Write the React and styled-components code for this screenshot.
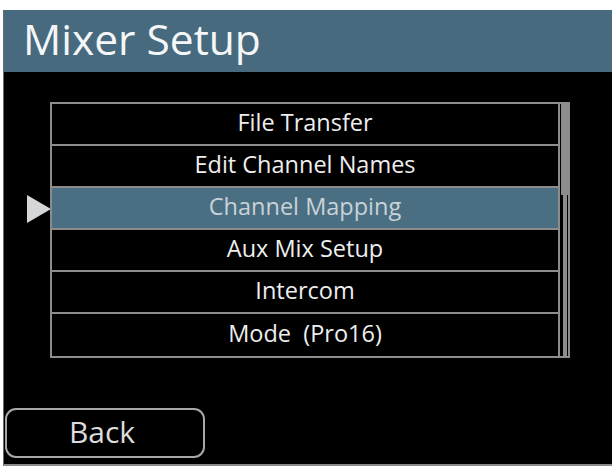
import styled, { createGlobalStyle } from "styled-components";

const GlobalStyle = createGlobalStyle`
  html, body {
    margin: 0;
    padding: 0;
    background: #ffffff;
  }
  body {
    font-family: "Open Sans", "Noto Sans", sans-serif;
  }
`;

const items = [
  "File Transfer",
  "Edit Channel Names",
  "Channel Mapping",
  "Aux Mix Setup",
  "Intercom",
  "Mode  (Pro16)",
];

const selectedIndex = 2;

export default function App() {
  return (
    <>
      <GlobalStyle />
      <Screen>
        <Header>
          <Title>Mixer Setup</Title>
        </Header>
        <Body>
          <MenuArea>
            <Pointers>
              {items.map((item, i) => (
                <PointerSlot key={item}>
                  {i === selectedIndex && <Pointer />}
                </PointerSlot>
              ))}
            </Pointers>
            <MenuBox>
              <Menu>
                {items.map((item, i) => (
                  <Row key={item} $selected={i === selectedIndex}>
                    {item}
                  </Row>
                ))}
              </Menu>
              <ScrollTrack>
                <ScrollThumb />
              </ScrollTrack>
            </MenuBox>
          </MenuArea>
          <Footer>
            <BackButton>Back</BackButton>
          </Footer>
        </Body>
      </Screen>
    </>
  );
}

const Screen = styled.div`
  margin: 10px 0 0 3px;
  height: 456px;
  display: flex;
  flex-direction: column;
  background: #000000;
  border-left: 1px solid #6a6a6a;
  border-bottom: 2px solid #8a8a8a;
  box-sizing: border-box;
`;

const Header = styled.div`
  height: 62px;
  background: #476a7e;
  display: flex;
  align-items: center;
  padding-left: 19px;
  padding-bottom: 4px;
  box-sizing: border-box;
  flex-shrink: 0;
`;

const Title = styled.h1`
  margin: 0;
  font-size: 42.5px;
  font-weight: 400;
  color: #f4f6f7;
  line-height: 1;
`;

const Body = styled.div`
  flex: 1;
  display: flex;
  flex-direction: column;
  justify-content: space-between;
  padding: 30px 0 6px 0;
`;

const MenuArea = styled.div`
  display: flex;
  align-items: stretch;
`;

const Pointers = styled.div`
  width: 46px;
  display: flex;
  flex-direction: column;
  padding-top: 2px;
`;

const PointerSlot = styled.div`
  height: 42px;
  display: flex;
  align-items: center;
  justify-content: flex-end;
`;

const Pointer = styled.div`
  width: 0;
  height: 0;
  border-top: 14px solid transparent;
  border-bottom: 14px solid transparent;
  border-left: 24px solid #d4d6d7;
  margin-right: -1px;
`;

const MenuBox = styled.div`
  width: 520px;
  display: flex;
  border: 2px solid #8c8c8c;
  box-sizing: border-box;
`;

const Menu = styled.div`
  flex: 1;
  display: flex;
  flex-direction: column;
`;

const Row = styled.div`
  height: 42px;
  box-sizing: border-box;
  display: flex;
  align-items: center;
  justify-content: center;
  white-space: pre;
  font-size: 23.5px;
  color: ${(p) => (p.$selected ? "#c9d2d7" : "#eeeeee")};
  background: ${(p) => (p.$selected ? "#4a6f83" : "transparent")};
  border-bottom: 2px solid #8c8c8c;
  border-right: 2px solid #8c8c8c;
  padding-bottom: 4px;

  &:last-child {
    border-bottom: none;
  }
`;

const ScrollTrack = styled.div`
  width: 8px;
  display: flex;
  flex-direction: column;
  border-left: 1px solid #000;
  box-sizing: border-box;

  &::after {
    content: "";
    flex: 1;
    margin: 0 1px 0 2px;
    border: 2px solid #8c8c8c;
    border-top: none;
  }
`;

const ScrollThumb = styled.div`
  height: 91px;
  background: #8c8c8c;
`;

const Footer = styled.div`
  display: flex;
`;

const BackButton = styled.button`
  width: 200px;
  height: 50px;
  margin-left: 1px;
  background: #000000;
  border: 2px solid #a8a8a8;
  border-radius: 11px;
  color: #dcdcdc;
  font-family: "Open Sans", "Noto Sans", sans-serif;
  font-size: 30px;
  padding: 0 6px 3px 0;
  display: flex;
  align-items: center;
  justify-content: center;
`;
